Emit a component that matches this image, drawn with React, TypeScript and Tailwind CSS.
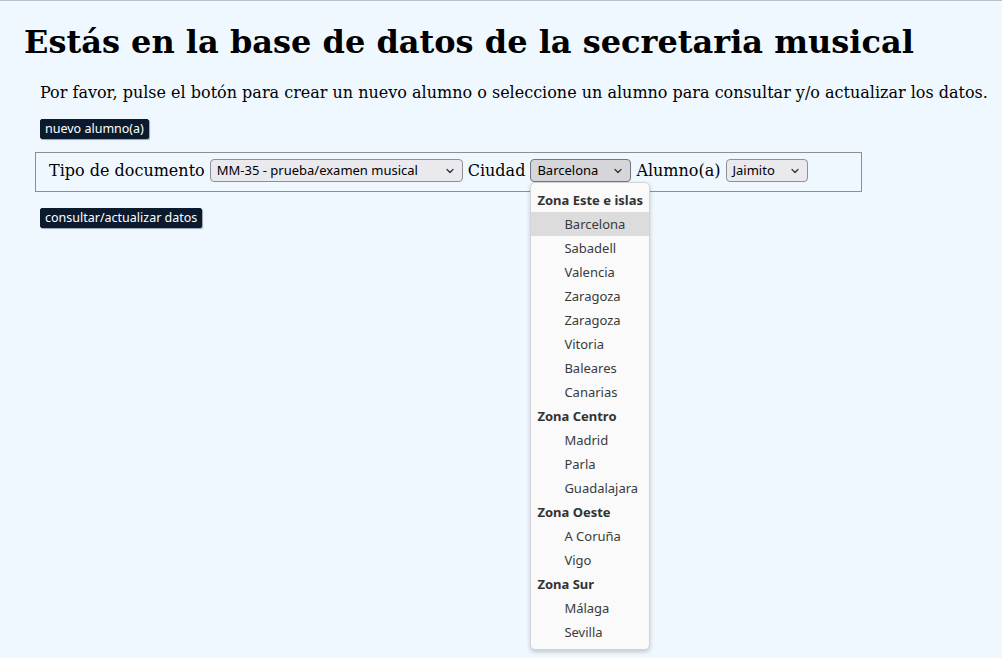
import { ChevronDown } from "lucide-react";

const zonas: { zona: string; ciudades: string[] }[] = [
  {
    zona: "Zona Este e islas",
    ciudades: ["Barcelona", "Sabadell", "Valencia", "Zaragoza", "Zaragoza", "Vitoria", "Baleares", "Canarias"],
  },
  { zona: "Zona Centro", ciudades: ["Madrid", "Parla", "Guadalajara"] },
  { zona: "Zona Oeste", ciudades: ["A Coruña", "Vigo"] },
  { zona: "Zona Sur", ciudades: ["Málaga", "Sevilla"] },
];

const serif = "font-['DejaVu_Serif',serif]";
const sans = "font-['Noto_Sans','Open_Sans',sans-serif]";

function Boton({ children }: { children: string }) {
  return (
    <button
      className={`${sans} h-[20px] px-[4px] text-[12.5px] leading-[18px] text-white bg-[#0c1a2e] border border-[#0c1a2e] rounded-[2px] shadow-[1px_1px_1px_#9aa3ad]`}
    >
      {children}
    </button>
  );
}

function Selector({
  value,
  width,
  open = false,
}: {
  value: string;
  width: string;
  open?: boolean;
}) {
  return (
    <div
      className={`${sans} ${width} h-[23px] flex items-center justify-between pl-[6px] pr-[6px] text-[13px] text-black border rounded-[4px] ${
        open ? "bg-[#d5d5da] border-[#75757d]" : "bg-[#e9e9ee] border-[#8f8f96]"
      }`}
    >
      <span>{value}</span>
      <ChevronDown size={12} strokeWidth={2.5} className="text-[#333]" />
    </div>
  );
}

export default function App() {
  return (
    <div className="min-h-screen bg-[#f0f8ff] border-t border-[#b9c2cb] text-black">
      <h1 className={`${serif} text-[32px] font-bold leading-[40px] pl-[24px] pt-[21px]`}>
        Estás en la base de datos de la secretaria musical
      </h1>
      <div className="pl-[35px] pr-[8px]">
        <p className={`${serif} text-[16px] leading-[24px] pl-[5px] mt-[19px]`}>
          Por favor, pulse el botón para crear un nuevo alumno o seleccione un alumno para consultar y/o actualizar los datos.
        </p>
        <div className="pl-[5px] mt-[10px]">
          <Boton>nuevo alumno(a)</Boton>
        </div>
        <div
          className={`${serif} mt-[13px] w-[827px] h-[40px] border border-[#8e8e8e] flex items-center gap-[5px] pl-[13px] pb-[3px] text-[16px]`}
        >
          <span>Tipo de documento</span>
          <Selector value="MM-35 - prueba/examen musical" width="w-[253px]" />
          <span>Ciudad</span>
          <div className="relative">
            <Selector value="Barcelona" width="w-[101px]" open />
            <div
              className={`${sans} absolute left-0 top-[23px] w-[120px] py-[5px] bg-[#fafafa] border border-[#d4d4d8] rounded-[5px] shadow-[0_2px_4px_rgba(0,0,0,0.2)] text-[13px] z-10`}
            >
              {zonas.map((z) => (
                <div key={z.zona}>
                  <div className="h-[24px] leading-[24px] pl-[6px] font-bold text-[#333]">{z.zona}</div>
                  {z.ciudades.map((c, i) => (
                    <div
                      key={`${c}-${i}`}
                      className={`h-[24px] leading-[24px] pl-[33px] text-[#3a3a3a] ${
                        c === "Barcelona" ? "bg-[#dcdcdc]" : ""
                      }`}
                    >
                      {c}
                    </div>
                  ))}
                </div>
              ))}
            </div>
          </div>
          <span>Alumno(a)</span>
          <Selector value="Jaimito" width="w-[82px]" />
        </div>
        <div className="pl-[5px] mt-[12px]">
          <Boton>consultar/actualizar datos</Boton>
        </div>
      </div>
    </div>
  );
}
